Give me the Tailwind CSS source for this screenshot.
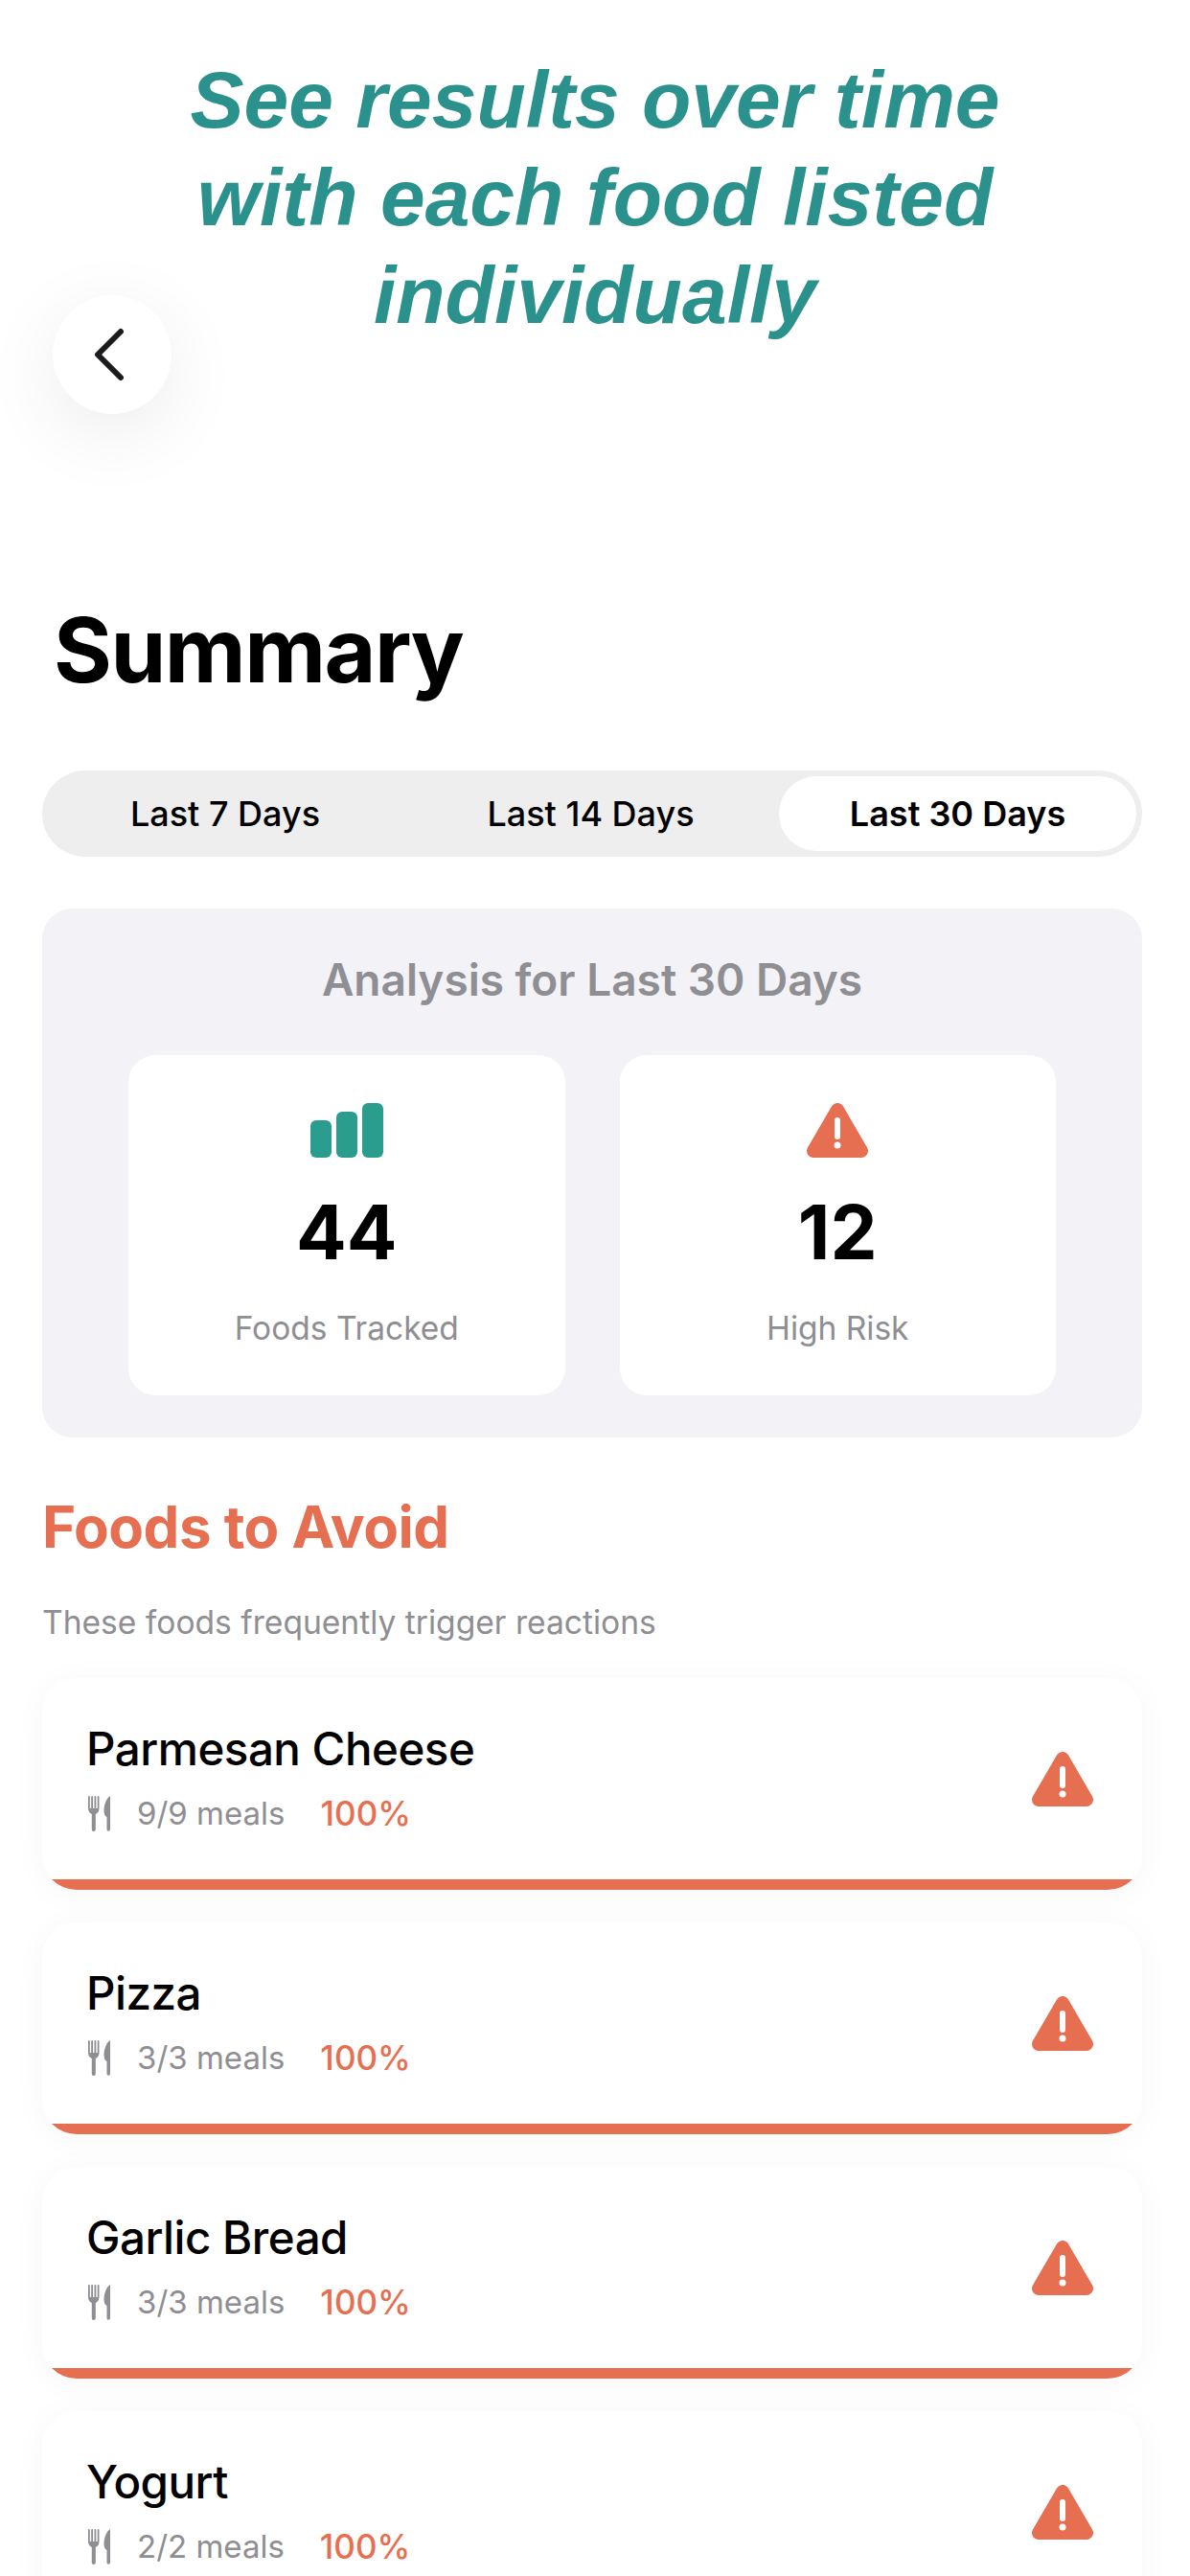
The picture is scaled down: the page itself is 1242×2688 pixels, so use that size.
<!DOCTYPE html>
<html>
<head>
<meta charset="utf-8">
<script src="https://cdn.jsdelivr.net/npm/@tailwindcss/browser@4"></script>
</head>
<body class="bg-white">
<svg width="0" height="0" class="absolute">
  <defs>
    <g id="warn"><path d="M32 7 L57 50 L7 50 Z" fill="#e76f51" stroke="#e76f51" stroke-width="14" stroke-linejoin="round"/><rect x="29" y="15" width="6" height="23" rx="3" fill="#fff"/><circle cx="32" cy="44" r="3.5" fill="#fff"/></g>
    <g id="fork"><path d="M0 1V13c0 3 1.500 5 3.800 6V35a2 2 0 0 0 4 0V19c2.300-1 3.700-3 3.700-6V1a.8.8 0 0 0-1.800 0V13H8.300V1a.8.8 0 0 0-1.800 0V13H5V1a.8.8 0 0 0-1.800 0V13H1.800V1a.9.9 0 0 0-1.800 0Z" fill="#8e8e93"/><path d="M23 0c-3.500 2-6.500 9-6.500 15.500 0 3.500 1 5.500 3 6.500V35a1.750 1.750 0 0 0 3.500 0V1Z" fill="#8e8e93"/></g>
  </defs>
</svg>
<div class="relative w-[1242px] h-[2688px] overflow-hidden bg-white font-['Inter','Liberation_Sans',sans-serif]">
  <h1 class="pt-[53px] w-full text-center font-['Liberation_Sans',sans-serif] italic font-bold text-[84px] leading-[102px] text-[#2a918c]">See results over time<br>with each food listed<br>individually</h1>

  <div class="absolute left-[55px] top-[308px] w-[124px] h-[124px] rounded-full bg-white shadow-[0_20px_80px_rgba(0,0,0,0.08)] flex items-center justify-center">
    <svg width="34" height="56" viewBox="0 0 34 56" fill="none" class="-ml-[6px]"><path d="M29 4 L5 28 L29 52" stroke="#1c1c1e" stroke-width="6" stroke-linecap="round" stroke-linejoin="round"/></svg>
  </div>

  <div class="pl-[44px] pr-[50px]">
    <h2 class="mt-[269px] pl-[12px] text-[93px] leading-[100px] font-bold text-black tracking-[-1.500px]">Summary</h2>

    <div class="mt-[76px] h-[90px] rounded-full bg-[#eeeeee] p-[6px] flex text-[36px] font-medium text-black">
      <div class="w-[370px] flex items-center justify-center">Last 7 Days</div>
      <div class="flex-1 flex items-center justify-center">Last 14 Days</div>
      <div class="w-[373px] flex items-center justify-center bg-white rounded-full font-semibold">Last 30 Days</div>
    </div>

    <section class="mt-[54px] h-[552px] rounded-[32px] bg-[#f2f2f7] px-[90px] pt-[46px]">
      <h3 class="text-center text-[46px] leading-[56px] font-semibold text-[#8e8e93]">Analysis for Last 30 Days</h3>
      <div class="mt-[51px] flex gap-[57px]">
        <div class="flex-1 h-[355px] rounded-[28px] bg-white flex flex-col items-center pt-[50px]">
          <div class="h-[57px] flex items-end gap-[5px]">
            <div class="w-[22px] h-[39px] rounded-[6px] bg-[#2a9d8f]"></div>
            <div class="w-[22px] h-[48px] rounded-[6px] bg-[#2a9d8f]"></div>
            <div class="w-[22px] h-[57px] rounded-[6px] bg-[#2a9d8f]"></div>
          </div>
          <div class="mt-[33px] text-[78px] leading-[90px] font-bold text-black">44</div>
          <div class="mt-[35px] text-[33.500px] leading-[40px] text-[#8e8e93]">Foods Tracked</div>
        </div>
        <div class="flex-1 h-[355px] rounded-[28px] bg-white flex flex-col items-center pt-[50px]">
          <svg width="64" height="57" viewBox="0 0 64 57"><use href="#warn"/></svg>
          <div class="mt-[33px] text-[78px] leading-[90px] font-bold text-black">12</div>
          <div class="mt-[35px] text-[33.500px] leading-[40px] text-[#8e8e93]">High Risk</div>
        </div>
      </div>
    </section>

    <h3 class="mt-[60px] text-[60px] leading-[66px] font-bold text-[#e76f51] tracking-[-0.500px]">Foods to Avoid</h3>
    <p class="mt-[47px] text-[33.600px] leading-[40px] text-[#8e8e93]">These foods frequently trigger reactions</p>

    <div class="mt-[38px] flex flex-col gap-[34px]">
      <article class="relative h-[221px] shrink-0 rounded-[36px] bg-white shadow-[0_4px_36px_rgba(0,0,0,0.035)] overflow-hidden pl-[46px] pr-[51px] flex justify-between">
        <div class="pt-[46px]">
          <div class="text-[47.500px] leading-[56px] font-medium text-black tracking-[-0.500px]">Parmesan Cheese</div>
          <div class="mt-[19px] flex items-center text-[33px] leading-[40px] text-[#8e8e93]">
            <svg width="24" height="37" viewBox="0 0 24 37" class="ml-[2px]"><use href="#fork"/></svg>
            <span class="ml-[27px]">9/9 meals</span><span class="ml-[37px] text-[35px] font-medium text-[#e76f51]">100%</span>
          </div>
        </div>
        <svg width="64" height="57" viewBox="0 0 64 57" class="mt-[77px]"><use href="#warn"/></svg>
        <div class="absolute inset-x-0 bottom-0 h-[11px] bg-[#e76f51]"></div>
      </article>
      <article class="relative h-[221px] shrink-0 rounded-[36px] bg-white shadow-[0_4px_36px_rgba(0,0,0,0.035)] overflow-hidden pl-[46px] pr-[51px] flex justify-between">
        <div class="pt-[46px]">
          <div class="text-[47.500px] leading-[56px] font-medium text-black tracking-[-0.500px]">Pizza</div>
          <div class="mt-[19px] flex items-center text-[33px] leading-[40px] text-[#8e8e93]">
            <svg width="24" height="37" viewBox="0 0 24 37" class="ml-[2px]"><use href="#fork"/></svg>
            <span class="ml-[27px]">3/3 meals</span><span class="ml-[37px] text-[35px] font-medium text-[#e76f51]">100%</span>
          </div>
        </div>
        <svg width="64" height="57" viewBox="0 0 64 57" class="mt-[77px]"><use href="#warn"/></svg>
        <div class="absolute inset-x-0 bottom-0 h-[11px] bg-[#e76f51]"></div>
      </article>
      <article class="relative h-[221px] shrink-0 rounded-[36px] bg-white shadow-[0_4px_36px_rgba(0,0,0,0.035)] overflow-hidden pl-[46px] pr-[51px] flex justify-between">
        <div class="pt-[46px]">
          <div class="text-[47.500px] leading-[56px] font-medium text-black tracking-[-0.500px]">Garlic Bread</div>
          <div class="mt-[19px] flex items-center text-[33px] leading-[40px] text-[#8e8e93]">
            <svg width="24" height="37" viewBox="0 0 24 37" class="ml-[2px]"><use href="#fork"/></svg>
            <span class="ml-[27px]">3/3 meals</span><span class="ml-[37px] text-[35px] font-medium text-[#e76f51]">100%</span>
          </div>
        </div>
        <svg width="64" height="57" viewBox="0 0 64 57" class="mt-[77px]"><use href="#warn"/></svg>
        <div class="absolute inset-x-0 bottom-0 h-[11px] bg-[#e76f51]"></div>
      </article>
      <article class="relative h-[221px] shrink-0 rounded-[36px] bg-white shadow-[0_4px_36px_rgba(0,0,0,0.035)] overflow-hidden pl-[46px] pr-[51px] flex justify-between">
        <div class="pt-[46px]">
          <div class="text-[47.500px] leading-[56px] font-medium text-black tracking-[-0.500px]">Yogurt</div>
          <div class="mt-[19px] flex items-center text-[33px] leading-[40px] text-[#8e8e93]">
            <svg width="24" height="37" viewBox="0 0 24 37" class="ml-[2px]"><use href="#fork"/></svg>
            <span class="ml-[27px]">2/2 meals</span><span class="ml-[37px] text-[35px] font-medium text-[#e76f51]">100%</span>
          </div>
        </div>
        <svg width="64" height="57" viewBox="0 0 64 57" class="mt-[77px]"><use href="#warn"/></svg>
        <div class="absolute inset-x-0 bottom-0 h-[11px] bg-[#e76f51]"></div>
      </article>
    </div>
  </div>
</div>
</body>
</html>
